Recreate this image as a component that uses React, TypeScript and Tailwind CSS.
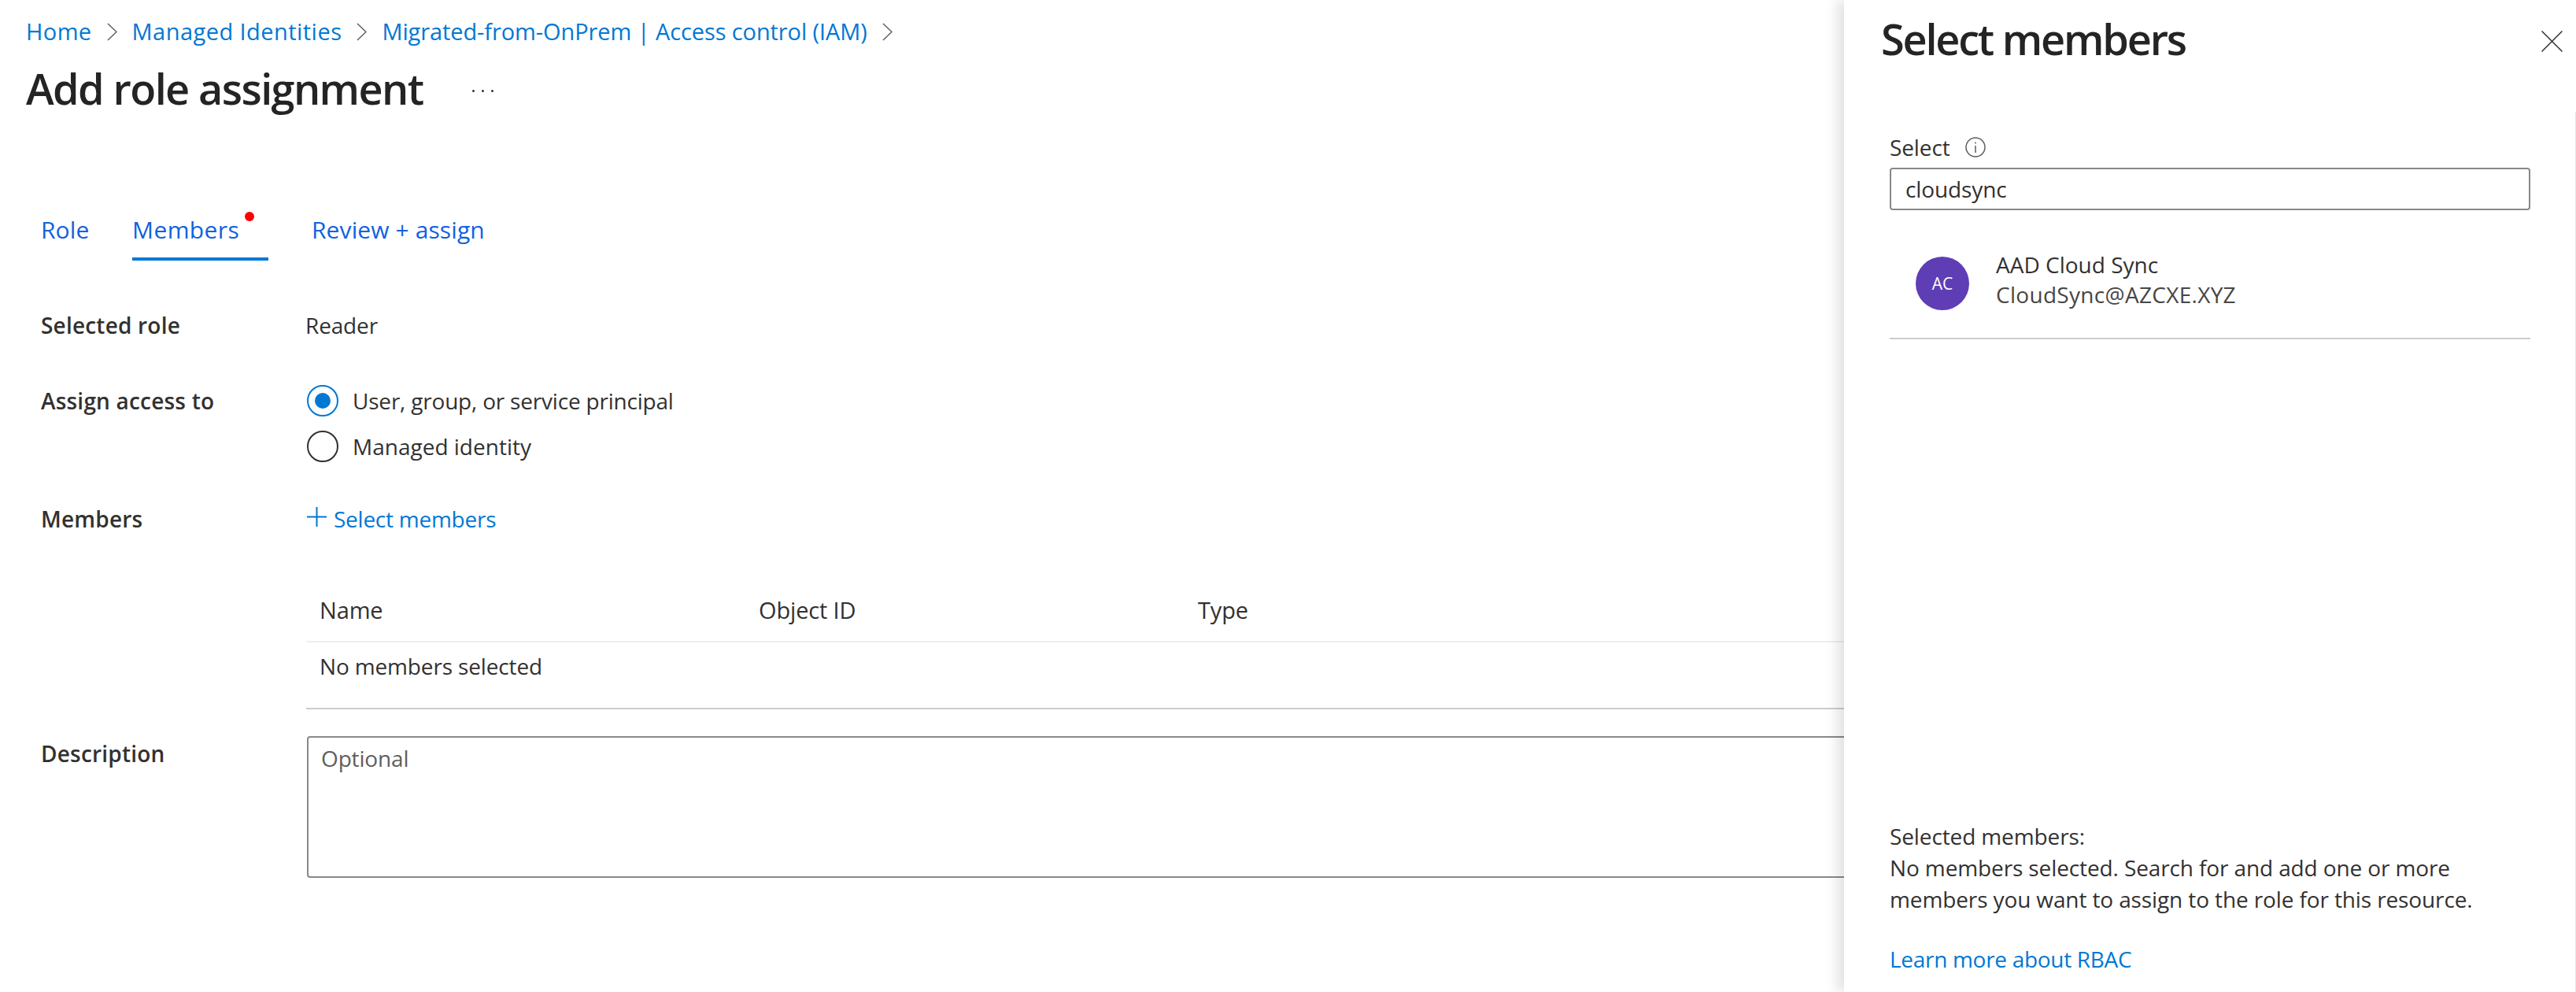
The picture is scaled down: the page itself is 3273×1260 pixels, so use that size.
const crumbs = [
  { label: "Home", track: "tracking-[0.4px]" },
  { label: "Managed Identities", track: "tracking-[0.45px]" },
  { label: "Migrated-from-OnPrem | Access control (IAM)", track: "tracking-[-0.1px]" },
];

function Chevron() {
  return (
    <svg viewBox="0 0 13 23" className="mx-[19px] h-[23px] w-[13px] text-[#605e5c]" fill="none" stroke="currentColor" strokeWidth="1.5">
      <path d="M1 1 L12 11.5 L1 22" />
    </svg>
  );
}

function Radio({ checked, label }: { checked?: boolean; label: string }) {
  return (
    <label className="flex h-[40px] items-center gap-[18px]">
      <span
        className={
          checked
            ? "flex h-[40px] w-[40px] items-center justify-center rounded-full border-2 border-[#0078d4]"
            : "flex h-[40px] w-[40px] items-center justify-center rounded-full border-2 border-[#323130]"
        }
      >
        {checked && <span className="h-[20px] w-[20px] rounded-full bg-[#0078d4]" />}
      </span>
      <span>{label}</span>
    </label>
  );
}

function Label({ children, className }: { children: React.ReactNode; className?: string }) {
  return <div className={"w-[339px] shrink-0 pl-[1px] font-semibold tracking-[0.2px] " + (className ?? "")}>{children}</div>;
}

function SelectPanel() {
  return (
    <aside className="absolute inset-y-0 left-[2343px] right-0 flex flex-col bg-white px-[58px] tracking-[-0.12px] shadow-[-8px_0_16px_rgba(0,0,0,0.12)]">
      <div className="-ml-[11px] -mr-[41px] flex h-[98px] items-center justify-between">
        <h2 className="text-[54px] leading-[60px] tracking-[-2.2px] font-semibold text-[#242424]">Select members</h2>
        <svg viewBox="0 0 27 27" className="mt-[7px] h-[27px] w-[27px] text-[#323130]" fill="none" stroke="currentColor" strokeWidth="1.5">
          <path d="M0.5 0.5 L26.5 26.5 M26.5 0.5 L0.5 26.5" />
        </svg>
      </div>
      <div className="mt-[69px] flex h-[40px] items-center">
        <span className="w-[96px]">Select</span>
        <svg viewBox="0 0 26 26" className="h-[26px] w-[26px] text-[#605e5c]" fill="none" stroke="currentColor" strokeWidth="1.5">
          <circle cx="13" cy="13" r="12" />
          <path d="M13 11 V20 M13 6.5 V8.5" />
        </svg>
      </div>
      <input
        readOnly
        value="cloudsync"
        className="mt-[6px] h-[54px] w-full rounded-[4px] border-2 border-[#8a8886] bg-white px-[18px] text-[#323130] outline-none"
      />
      <div className="mt-[33px] flex h-[120px] items-center pl-[33px]">
        <div className="flex h-[68px] w-[68px] items-center justify-center rounded-full bg-[#5f3db5] text-[21px] text-white">AC</div>
        <div className="-mt-[10px] ml-[34px]">
          <div className="leading-[38px] tracking-[0px] text-[#323130]">AAD Cloud Sync</div>
          <div className="leading-[38px] tracking-[0.3px] text-[#484644]">CloudSync@AZCXE.XYZ</div>
        </div>
      </div>
      <div className="mt-[9px] h-[2px] bg-[#cccccc]" />
      <div className="mt-auto leading-[40px]">
        <p>Selected members:</p>
        <p>No members selected. Search for and add one or more</p>
        <p>members you want to assign to the role for this resource.</p>
      </div>
      <a className="mb-[22px] mt-[36px] leading-[40px] tracking-[-0.3px] text-[#0078d4]">Learn more about RBAC</a>
    </aside>
  );
}

export default function App() {
  return (
    <div className="relative h-[1260px] w-[3273px] overflow-hidden bg-white font-['Open_Sans',sans-serif] text-[28px] leading-[40px] tracking-[-0.15px] text-[#323130]">
      <main className="px-[33px] pt-[20px]">
        <nav className="flex h-[40px] items-center text-[29px] text-[#0078d4]">
          {crumbs.map((c) => (
            <span key={c.label} className="flex items-center">
              <span className={c.track}>{c.label}</span>
              <Chevron />
            </span>
          ))}
        </nav>
        <div className="mt-[22px] flex h-[60px] items-center">
          <h1 className="text-[54px] leading-[60px] tracking-[-1.6px] font-semibold text-[#242424]">Add role assignment</h1>
          <span className="ml-[62px] mt-[6px] flex gap-[9px]">
            <i className="h-[3px] w-[3px] rounded-full bg-[#323130]" />
            <i className="h-[3px] w-[3px] rounded-full bg-[#323130]" />
            <i className="h-[3px] w-[3px] rounded-full bg-[#323130]" />
          </span>
        </div>

        <div className="ml-[18px] mt-[128px]">
          <div className="flex h-[61px] items-start text-[30px] tracking-[0.1px] text-[#0f62e0]">
            <span className="mt-[2px] w-[117px] pl-[1px]">Role</span>
            <span className="relative mr-[55px] h-[61px] w-[173px] border-b-[4px] border-[#0078d4] pt-[2px] font-medium tracking-[0.4px]">
              Members
              <i className="absolute left-[143px] top-[-1px] h-[12px] w-[12px] rounded-full bg-[#ff0000]" />
            </span>
            <span className="mt-[2px]">Review + assign</span>
          </div>

          <div className="mt-[62px] flex">
            <Label>Selected role</Label>
            <span className="-ml-[2px]">Reader</span>
          </div>

          <div className="mt-[56px] flex">
            <Label>Assign access to</Label>
            <div className="flex-1 tracking-[-0.2px]">
              <Radio checked label="User, group, or service principal" />
              <div className="mt-[18px] tracking-[0px]">
                <Radio label="Managed identity" />
              </div>
            </div>
          </div>

          <div className="mt-[52px] flex">
            <Label>Members</Label>
            <span className="flex items-center tracking-[-0.25px] text-[#0078d4]">
              <svg viewBox="0 0 25 25" className="mr-[9px] -mt-[5px] h-[25px] w-[25px]" fill="none" stroke="currentColor" strokeWidth="2">
                <path d="M12.5 0 V25 M0 12.5 H25" />
              </svg>
              Select members
            </span>
          </div>

          <div className="ml-[338px] mt-[56px]">
            <div className="flex h-[81px] items-center border-b-2 border-[#eeeeee] pl-[17px] text-[29px] font-medium">
              <span className="w-[558px]">Name</span>
              <span className="w-[558px]">Object ID</span>
              <span>Type</span>
            </div>
            <div className="h-[85px] border-b-2 border-[#cccccc] pl-[17px] pt-[10px]">No members selected</div>
          </div>

          <div className="mt-[34px] flex">
            <Label className="mt-[2px]">Description</Label>
            <textarea
              readOnly
              placeholder="Optional"
              className="h-[180px] flex-1 resize-none rounded-[4px] border-2 border-[#8a8886] px-[16px] py-[6px] outline-none placeholder:text-[#605e5c]"
            />
          </div>
        </div>
      </main>
      <SelectPanel />
      <div className="absolute bottom-0 right-0 top-[142px] w-[1px] bg-[#e6e6e6]" />
    </div>
  );
}
